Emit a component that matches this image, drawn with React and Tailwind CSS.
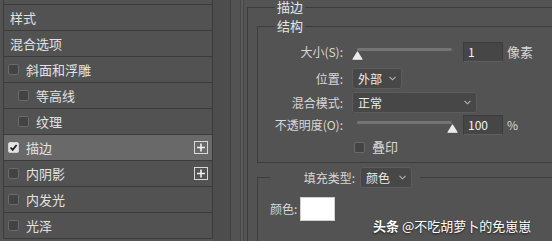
import React from "react";

// Photoshop 图层样式 - 描边 面板

const Check = ({ checked }) => (
  <span
    className={
      "w-[11px] h-[11px] rounded-[2px] border flex items-center justify-center shrink-0 " +
      (checked ? "bg-[#e4e4e4] border-[#cfcfcf]" : "bg-[#434343] border-[#6a6a6a]")
    }
  >
    {checked && (
      <svg width="9" height="9" viewBox="0 0 9 9">
        <path d="M1.5 4.5 L3.7 6.8 L7.6 2" fill="none" stroke="#1e1e1e" strokeWidth="1.8" />
      </svg>
    )}
  </span>
);

const Plus = () => (
  <span className="ml-auto mr-[4px] w-[14px] h-[13px] border border-[#d8d8d8] flex items-center justify-center">
    <svg width="10" height="9" viewBox="0 0 10 9">
      <path d="M5 0.5 V8.5 M1 4.5 H9" stroke="#f0f0f0" strokeWidth="1.6" />
    </svg>
  </span>
);

const Row = ({ label, check, checked, indent, plus, active }) => (
  <div
    className={
      "flex items-center h-[26px] border-b border-[#3b3b3b] " +
      (active ? "bg-[#696969]" : "bg-[#525252]") +
      (check ? (indent ? " pl-[14px]" : " pl-[4px]") : " pl-[6px]")
    }
  >
    {check && <Check checked={checked} />}
    <span className={check ? "ml-[7px]" : ""}>{label}</span>
    {plus && <Plus />}
  </div>
);

const Chevron = () => (
  <svg width="7" height="5" viewBox="0 0 7 5" className="ml-auto mr-[5px]">
    <path d="M0.5 0.8 L3.5 3.8 L6.5 0.8" fill="none" stroke="#b4b4b4" strokeWidth="1.1" />
  </svg>
);

const Select = ({ value, w }) => (
  <div className={"h-full flex items-center bg-[#474747] border border-[#5c5c5c] rounded-[3px] pl-[5px] text-[#ececec] " + w}>
    <span>{value}</span>
    <Chevron />
  </div>
);

const Thumb = () => (
  <svg width="11" height="9" viewBox="0 0 11 9">
    <path d="M5.5 1 L10 8.2 L1 8.2 Z" fill="#ececec" stroke="#ececec" strokeWidth="1.2" strokeLinejoin="round" />
  </svg>
);

const Slider = ({ right }) => (
  <div className="relative w-[105px] h-full">
    <div className="absolute left-[5px] right-[5px] top-[6px] h-[3px] rounded-full bg-[#747474]" />
    <div className={"absolute top-[9px] " + (right ? "left-[95px]" : "left-0")}>
      <Thumb />
    </div>
  </div>
);

const Input = ({ value }) => (
  <div className="ml-[6px] w-[40px] h-full bg-[#464646] border border-[#3c3c3c] border-b-[#5e5e5e] flex items-center pl-[4px] text-[#f2f2f2]">
    {value}
  </div>
);

const Label = ({ children }) => (
  <span className="w-[85px] mr-[9px] text-right shrink-0">{children}</span>
);

export default function App() {
  return (
    <div className="w-[552px] h-[241px] bg-[#535353] overflow-hidden flex relative font-['Noto_Sans_CJK_SC','Noto_Sans',sans-serif] text-[#e2e2e2]">
      {/* 左侧样式列表 */}
      <div className="w-[213px] shrink-0 pl-[3px] text-[13px]">
        <div className="border-x border-[#3b3b3b]">
          <div className="h-[5px] border-b border-[#3b3b3b] bg-[#525252]" />
          <Row label="样式" />
          <Row label="混合选项" />
          <Row label="斜面和浮雕" check />
          <Row label="等高线" check indent />
          <Row label="纹理" check indent />
          <Row label="描边" check checked plus active />
          <Row label="内阴影" check plus />
          <Row label="内发光" check />
          <Row label="光泽" check />
        </div>
      </div>

      <div className="w-[18px] shrink-0 bg-[#4d4d4d] border-r border-[#3e3e3e]" />
      <div className="w-[9px] shrink-0" />
      <div className="w-px shrink-0 bg-[#474747]" />
      <div className="w-[2px] shrink-0 bg-[#5a5a5a]" />
      <div className="w-px shrink-0 bg-[#474747]" />
      <div className="w-[3px] shrink-0" />

      {/* 右侧 描边 设置 */}
      <fieldset className="w-[400px] h-[300px] shrink-0 border border-[#3d3d3d] pl-[9px] text-[12px] text-[#d8d8d8]">
        <legend className="ml-[18px] px-[2px] text-[13px] leading-[14px] text-[#e6e6e6]">描边</legend>

        <fieldset className="mt-[5px] w-[350px] border border-[#3d3d3d] pb-[9px]">
          <legend className="ml-[17px] px-[2px] text-[13px] leading-[14px] text-[#e6e6e6]">结构</legend>

          <div className="mt-[9px] h-[20px] flex items-center">
            <Label>大小(S):</Label>
            <Slider />
            <Input value="1" />
            <span className="ml-[4px] text-[13px]">像素</span>
          </div>

          <div className="mt-[6px] h-[21px] flex items-center">
            <Label>位置:</Label>
            <Select value="外部" w="w-[50px]" />
          </div>

          <div className="mt-[3px] h-[21px] flex items-center">
            <Label>混合模式:</Label>
            <Select value="正常" w="w-[125px]" />
          </div>

          <div className="mt-[2px] h-[20px] flex items-center">
            <Label>不透明度(O):</Label>
            <Slider right />
            <Input value="100" />
            <span className="ml-[4px]">%</span>
          </div>

          <div className="mt-[6px] h-[12px] flex items-center">
            <span className="w-[85px] mr-[9px] shrink-0" />
            <span className="ml-[2px]">
              <Check />
            </span>
            <span className="ml-[7px] text-[13px]">叠印</span>
          </div>
        </fieldset>

        <fieldset className="mt-[4px] w-[350px] h-[100px] border border-[#3d3d3d]">
          <legend className="ml-[12px] pr-[8px]">
            <div className="h-[21px] flex items-center">
              <span className="w-[85px] text-right">填充类型:</span>
              <div className="ml-[5px] h-full">
                <Select value="颜色" w="w-[52px]" />
              </div>
            </div>
          </legend>
          <div className="mt-[9px] pl-[12px] flex items-center">
            <span>颜色:</span>
            <div className="ml-[3px] w-[35px] h-[24px] bg-white border border-[#d0d0d0]" />
          </div>
        </fieldset>
      </fieldset>

      {/* 水印 */}
      <div className="absolute left-[373px] top-[219px] text-[13px] leading-[13px] text-white [text-shadow:0_1px_2px_rgba(0,0,0,0.7)] whitespace-nowrap">
        <span className="font-bold">头条</span> @不吃胡萝卜的免崽崽
      </div>
    </div>
  );
}
